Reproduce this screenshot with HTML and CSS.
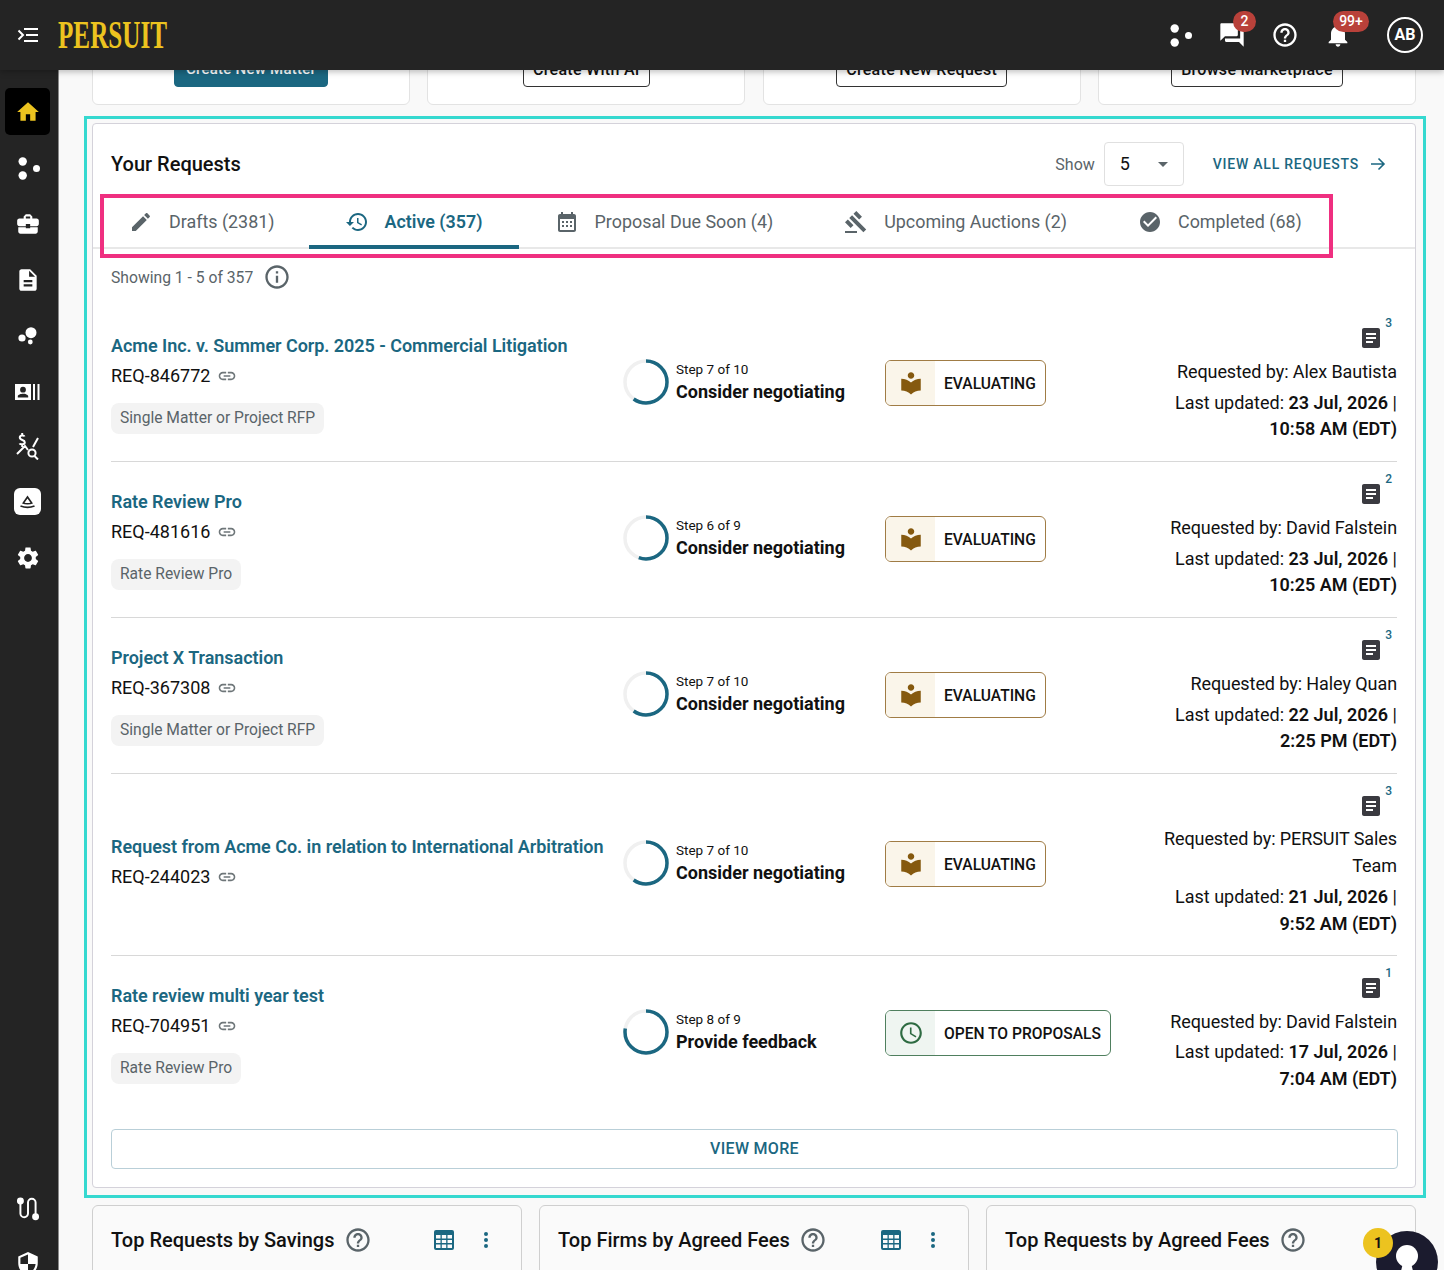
FILE: index.html
```html
<!DOCTYPE html>
<html lang="en">
<head>
<meta charset="UTF-8">
<meta name="viewport" content="width=device-width, initial-scale=1.0">
<title>Persuit Dashboard</title>
<link rel="stylesheet" href="styles.css">
</head>
<body>

<!-- Icon sprites -->
<svg class="icon-defs" xmlns="http://www.w3.org/2000/svg">
    <symbol id="i-dots" viewBox="0 0 24 24"><circle cx="6.7" cy="5.5" r="4.2"/><circle cx="6.7" cy="19.5" r="4.2"/><circle cx="20.5" cy="12.5" r="3.5"/></symbol>
    <symbol id="i-home" viewBox="0 0 24 24"><path d="M10 20v-6h4v6h5v-8h3L12 3 2 12h3v8z"/></symbol>
    <symbol id="i-case" viewBox="0 0 24 24"><path d="M10 16v-1H3.01L3 19c0 1.11.89 2 2 2h14c1.11 0 2-.89 2-2v-4h-7v1h-4zm10-9h-4.01V5l-2-2h-4l-2 2v2H4c-1.1 0-2 .9-2 2v3c0 1.11.89 2 2 2h6v-2h4v2h6c1.1 0 2-.9 2-2V9c0-1.1-.9-2-2-2zm-6 0h-4V5h4v2z"/></symbol>
    <symbol id="i-doc" viewBox="0 0 24 24"><path d="M14 2H6c-1.1 0-1.99.9-1.99 2L4 20c0 1.1.89 2 1.99 2H18c1.1 0 2-.9 2-2V8l-6-6zm2 16H8v-2h8v2zm0-4H8v-2h8v2zm-3-5V3.5L18.5 9H13z"/></symbol>
    <symbol id="i-edit" viewBox="0 0 24 24"><path d="M3 17.25V21h3.75L17.81 9.94l-3.75-3.75L3 17.25zM20.71 7.04c.39-.39.39-1.02 0-1.41l-2.34-2.34c-.39-.39-1.02-.39-1.41 0l-1.83 1.83 3.75 3.75 1.83-1.83z"/></symbol>
    <symbol id="i-history" viewBox="0 0 24 24"><path d="M13 3c-4.97 0-9 4.03-9 9H1l3.89 3.89.07.14L9 12H6c0-3.87 3.13-7 7-7s7 3.13 7 7-3.13 7-7 7c-1.93 0-3.68-.79-4.94-2.06l-1.42 1.42C8.27 19.99 10.51 21 13 21c4.97 0 9-4.03 9-9s-4.03-9-9-9zm-1 5v5l4.28 2.54.72-1.21-3.5-2.08V8H12z"/></symbol>
    <symbol id="i-calendar" viewBox="0 0 24 24"><path d="M19 4h-1V2h-2v2H8V2H6v2H5c-1.11 0-1.99.9-1.99 2L3 20c0 1.1.89 2 2 2h14c1.1 0 2-.9 2-2V6c0-1.1-.9-2-2-2zm0 16H5V9h14v11zM7 11h2v2H7zm4 0h2v2h-2zm4 0h2v2h-2zm-8 4h2v2H7zm4 0h2v2h-2zm4 0h2v2h-2z"/></symbol>
    <symbol id="i-gavel" viewBox="0 0 24 24"><path d="M1 21h12v2H1zM5.245 8.07l2.83-2.827 14.14 14.142-2.828 2.828zM12.317 1l5.657 5.656-2.83 2.83-5.654-5.66zM3.825 9.485l5.657 5.657-2.828 2.828-5.657-5.657z"/></symbol>
    <symbol id="i-check" viewBox="0 0 24 24"><path d="M12 2C6.48 2 2 6.48 2 12s4.48 10 10 10 10-4.48 10-10S17.52 2 12 2zm-2 15l-5-5 1.41-1.41L10 14.17l7.59-7.59L19 8l-9 9z"/></symbol>
    <symbol id="i-help" viewBox="0 0 24 24"><path d="M11 18h2v-2h-2v2zm1-16C6.48 2 2 6.48 2 12s4.48 10 10 10 10-4.48 10-10S17.52 2 12 2zm0 18c-4.41 0-8-3.59-8-8s3.59-8 8-8 8 3.59 8 8-3.59 8-8 8zm0-14c-2.21 0-4 1.79-4 4h2c0-1.1.9-2 2-2s2 .9 2 2c0 2-3 1.75-3 5h2c0-2.25 3-2.5 3-5 0-2.21-1.79-4-4-4z"/></symbol>
    <symbol id="i-info" viewBox="0 0 24 24"><path d="M11 7h2v2h-2zm0 4h2v6h-2zm1-9C6.48 2 2 6.48 2 12s4.48 10 10 10 10-4.48 10-10S17.52 2 12 2zm0 18c-4.41 0-8-3.59-8-8s3.59-8 8-8 8 3.59 8 8-3.59 8-8 8z"/></symbol>
    <symbol id="i-bell" viewBox="0 0 24 24"><path d="M12 22c1.1 0 2-.9 2-2h-4c0 1.1.89 2 2 2zm6-6v-5c0-3.07-1.64-5.64-4.5-6.32V4c0-.83-.67-1.5-1.5-1.5s-1.5.67-1.5 1.5v.68C7.63 5.36 6 7.92 6 11v5l-2 2v1h16v-1l-2-2z"/></symbol>
    <symbol id="i-chat" viewBox="0 0 24 24"><path d="M21 6h-2v9H6v2c0 .55.45 1 1 1h11l4 4V7c0-.55-.45-1-1-1zm-4 6V3c0-.55-.45-1-1-1H3c-.55 0-1 .45-1 1v14l4-4h10c.55 0 1-.45 1-1z"/></symbol>
    <symbol id="i-gear" viewBox="0 0 24 24"><path d="M19.14 12.94c.04-.3.06-.61.06-.94 0-.32-.02-.64-.07-.94l2.03-1.58c.18-.14.23-.41.12-.61l-1.92-3.32c-.12-.22-.37-.29-.59-.22l-2.39.96c-.5-.38-1.03-.7-1.62-.94l-.36-2.54c-.04-.24-.24-.41-.48-.41h-3.84c-.24 0-.43.17-.47.41l-.36 2.54c-.59.24-1.13.57-1.62.94l-2.39-.96c-.22-.08-.47 0-.59.22L2.74 8.87c-.12.21-.08.47.12.61l2.03 1.58c-.05.3-.09.63-.09.94s.02.64.07.94l-2.03 1.58c-.18.14-.23.41-.12.61l1.92 3.32c.12.22.37.29.59.22l2.39-.96c.5.38 1.03.7 1.62.94l.36 2.54c.05.24.24.41.48.41h3.84c.24 0 .44-.17.47-.41l.36-2.54c.59-.24 1.13-.56 1.62-.94l2.39.96c.22.08.47 0 .59-.22l1.92-3.32c.12-.22.07-.47-.12-.61l-2.01-1.58zM12 15.6c-1.98 0-3.6-1.62-3.6-3.6s1.62-3.6 3.6-3.6 3.6 1.62 3.6 3.6-1.62 3.6-3.6 3.6z"/></symbol>
    <symbol id="i-link" viewBox="0 0 24 24"><path d="M3.9 12c0-1.71 1.39-3.1 3.1-3.1h4V7H7c-2.76 0-5 2.24-5 5s2.24 5 5 5h4v-1.9H7c-1.71 0-3.1-1.39-3.1-3.1zM8 13h8v-2H8v2zm9-6h-4v1.9h4c1.71 0 3.1 1.39 3.1 3.1s-1.39 3.1-3.1 3.1h-4V17h4c2.76 0 5-2.24 5-5s-2.24-5-5-5z"/></symbol>
    <symbol id="i-article" viewBox="0 0 24 24"><path d="M19 2H5c-1.1 0-2 .9-2 2v16c0 1.1.9 2 2 2h14c1.1 0 2-.9 2-2V4c0-1.1-.9-2-2-2zm-5 15H7v-2h7v2zm3-4H7v-2h10v2zm0-4H7V7h10v2z"/></symbol>
    <symbol id="i-reader" viewBox="0 0 24 24"><path d="M12 11.55C9.64 9.35 6.48 8 3 8v11c3.48 0 6.64 1.35 9 3.55 2.36-2.19 5.52-3.55 9-3.55V8c-3.48 0-6.64 1.35-9 3.55zM12 8c1.66 0 3-1.34 3-3s-1.34-3-3-3-3 1.34-3 3 1.34 3 3 3z"/></symbol>
    <symbol id="i-clock" viewBox="0 0 24 24"><path d="M11.99 2C6.47 2 2 6.48 2 12s4.47 10 9.99 10C17.52 22 22 17.52 22 12S17.52 2 11.99 2zM12 20c-4.42 0-8-3.58-8-8s3.58-8 8-8 8 3.58 8 8-3.58 8-8 8zm.5-13H11v6l5.25 3.15.75-1.23-4.5-2.67z"/></symbol>
    <symbol id="i-shield" viewBox="0 0 24 24"><path d="M12 1L3 5v6c0 5.55 3.84 10.74 9 12 5.16-1.26 9-6.45 9-12V5l-9-4zm0 10.99h7c-.53 4.12-3.28 7.79-7 8.94V12H5V6.3l7-3.11v8.8z"/></symbol>
    <symbol id="i-table" viewBox="0 0 20 20"><path fill-rule="evenodd" d="M2 0h16a2 2 0 0 1 2 2v16a2 2 0 0 1-2 2H2a2 2 0 0 1-2-2V2a2 2 0 0 1 2-2zM2 5v3.5h4.5V5zm5.8 0v3.5h4.4V5zm5.7 0v3.5H18V5zM2 10v3h4.5v-3zm5.8 0v3h4.4v-3zm5.7 0v3H18v-3zM2 14.5V18h4.5v-3.5zm5.8 0V18h4.4v-3.5zm5.7 0V18H18v-3.5z"/></symbol>
    <symbol id="i-more" viewBox="0 0 24 24"><circle cx="12" cy="6" r="2"/><circle cx="12" cy="12" r="2"/><circle cx="12" cy="18" r="2"/></symbol>
</svg>

<!-- Top bar -->
<header class="topbar">
    <svg class="menu-icon" viewBox="0 0 24 24" fill="none" stroke="currentColor" stroke-width="2"><path d="M8 6h14M10 12h12M8 18h14M2.5 7.5L7 12l-4.5 4.5"/></svg>
    <div class="logo"><span class="logo-text">PERSUIT</span></div>
    <div class="topbar-actions">
        <svg class="top-icon dots-icon"><use href="#i-dots"/></svg>
        <div class="top-item chat-item">
            <svg class="top-icon"><use href="#i-chat"/></svg>
            <span class="top-badge">2</span>
        </div>
        <svg class="top-icon help-icon"><use href="#i-help"/></svg>
        <div class="top-item bell-item">
            <svg class="top-icon"><use href="#i-bell"/></svg>
            <span class="top-badge top-badge-wide">99+</span>
        </div>
        <div class="avatar">AB</div>
    </div>
</header>

<div class="layout">
    <!-- Sidebar -->
    <nav class="sidebar">
        <a class="side-item active"><svg class="side-icon"><use href="#i-home"/></svg></a>
        <a class="side-item"><svg class="side-icon side-icon-dots"><use href="#i-dots"/></svg></a>
        <a class="side-item"><svg class="side-icon"><use href="#i-case"/></svg></a>
        <a class="side-item"><svg class="side-icon"><use href="#i-doc"/></svg></a>
        <a class="side-item">
            <svg class="side-icon side-icon-dots" viewBox="0 0 24 24"><circle cx="15" cy="8.7" r="5.5"/><circle cx="6" cy="14" r="3.6"/><circle cx="14.3" cy="18" r="2.4"/></svg>
        </a>
        <a class="side-item side-item-tight">
            <svg class="side-icon side-icon-wide" viewBox="0 0 26 24"><path fill-rule="evenodd" d="M0 5h16v16H0zM8 7.8a2.9 2.9 0 1 0 0 5.8 2.9 2.9 0 0 0 0-5.8zM2.8 18.6h10.4v-1.4c0-1.5-3.2-2.4-5.2-2.4s-5.2.9-5.2 2.4z"/><path d="M18 5h2v16h-2zM22.5 5h2v16h-2z"/></svg>
        </a>
        <a class="side-item side-item-tight">
            <svg class="side-icon side-icon-wide side-icon-line" viewBox="0 0 26 28" stroke="#fff" stroke-width="2"><path d="M9.5 4.5C9 3.2 4.8 3 4.8 5.6c0 3 5 1.8 5 4.7 0 2.6-4.5 2.5-5.2 1M7.2 1v2M7.2 12.5V15M23 6l-5 9M2 22l8-8 3 4"/><circle cx="17" cy="21" r="3.6"/><path d="M19.5 24l3.5 3.5"/></svg>
        </a>
        <a class="side-item">
            <svg class="side-icon side-icon-app" viewBox="0 0 27 27"><rect width="27" height="27" rx="6" fill="#fff"/><path d="M13.5 7.5l5.500 8c-3.500 1.200-7.500 1.200-11 0zM13.5 10.5l-3 4.200c2 .4 4 .4 6 0z" fill="#222" fill-rule="evenodd"/><path d="M6.500 18c4.500 1.700 9.500 1.700 14 0" fill="none" stroke="#222" stroke-width="1.800"/></svg>
        </a>
        <a class="side-item"><svg class="side-icon"><use href="#i-gear"/></svg></a>
        <a class="side-item side-item-low">
            <svg class="side-icon side-icon-line" viewBox="0 0 24 24" stroke="#fff" stroke-width="1.8"><path d="M5 6v11a3.500 3.500 0 0 0 7 0V7a3.500 3.500 0 0 1 7 0v13"/><circle cx="5" cy="5.500" r="2.300" fill="#fff"/><circle cx="19" cy="20" r="2.300" fill="#fff"/></svg>
        </a>
        <a class="side-item"><svg class="side-icon"><use href="#i-shield"/></svg></a>
    </nav>

    <main class="main">
        <!-- Quick action cards -->
        <section class="quick-cards">
            <div class="quick-card"><button class="quick-btn primary">Create New Matter</button></div>
            <div class="quick-card"><button class="quick-btn">Create With AI</button></div>
            <div class="quick-card"><button class="quick-btn">Create New Request</button></div>
            <div class="quick-card"><button class="quick-btn">Browse Marketplace</button></div>
        </section>

        <!-- Your Requests -->
        <section class="highlight">
            <div class="requests-card">
                <div class="requests-head">
                    <h2 class="requests-title">Your Requests</h2>
                    <span class="show-label">Show</span>
                    <div class="show-select">5<span class="caret"></span></div>
                    <a class="view-all">VIEW ALL REQUESTS
                        <svg class="arrow" viewBox="0 0 16 16" fill="none" stroke="currentColor" stroke-width="1.6"><path d="M1 8h13M8.500 2.500L14 8l-5.500 5.500"/></svg>
                    </a>
                </div>

                <div class="tabs">
                    <div class="tab tab-first"><svg class="tab-icon"><use href="#i-edit"/></svg>Drafts (2381)</div>
                    <div class="tab active"><svg class="tab-icon"><use href="#i-history"/></svg>Active (357)</div>
                    <div class="tab"><svg class="tab-icon"><use href="#i-calendar"/></svg>Proposal Due Soon (4)</div>
                    <div class="tab"><svg class="tab-icon"><use href="#i-gavel"/></svg>Upcoming Auctions (2)</div>
                    <div class="tab"><svg class="tab-icon"><use href="#i-check"/></svg>Completed (68)</div>
                    <div class="tabs-marker"></div>
                </div>

                <div class="showing">Showing 1 - 5 of 357 <svg class="info-icon"><use href="#i-info"/></svg></div>

                <div class="request-list">
                    <article class="request-row">
                        <div class="req-main">
                            <a class="req-title">Acme Inc. v. Summer Corp. 2025 - Commercial Litigation</a>
                            <div class="req-id">REQ-846772 <svg class="link-icon"><use href="#i-link"/></svg></div>
                            <span class="req-chip">Single Matter or Project RFP</span>
                        </div>
                        <div class="req-step">
                            <svg class="ring" viewBox="0 0 46 46"><circle class="ring-track" cx="23" cy="23" r="21"/><circle class="ring-bar" cx="23" cy="23" r="21" pathLength="100" stroke-dasharray="60 100"/></svg>
                            <div><div class="step-num">Step 7 of 10</div><div class="step-name">Consider negotiating</div></div>
                        </div>
                        <div class="req-status">
                            <div class="status eval"><span class="status-icon"><svg><use href="#i-reader"/></svg></span><span class="status-text">EVALUATING</span></div>
                        </div>
                        <div class="req-meta">
                            <div class="doc-line"><svg class="doc-icon"><use href="#i-article"/></svg><span class="doc-count">3</span></div>
                            <div class="meta-by">Requested by: Alex Bautista</div>
                            <div class="meta-date">Last updated: <b>23 Jul, 2026</b> | <b>10:58 AM (EDT)</b></div>
                        </div>
                    </article>

                    <article class="request-row">
                        <div class="req-main">
                            <a class="req-title">Rate Review Pro</a>
                            <div class="req-id">REQ-481616 <svg class="link-icon"><use href="#i-link"/></svg></div>
                            <span class="req-chip">Rate Review Pro</span>
                        </div>
                        <div class="req-step">
                            <svg class="ring" viewBox="0 0 46 46"><circle class="ring-track" cx="23" cy="23" r="21"/><circle class="ring-bar" cx="23" cy="23" r="21" pathLength="100" stroke-dasharray="55.6 100"/></svg>
                            <div><div class="step-num">Step 6 of 9</div><div class="step-name">Consider negotiating</div></div>
                        </div>
                        <div class="req-status">
                            <div class="status eval"><span class="status-icon"><svg><use href="#i-reader"/></svg></span><span class="status-text">EVALUATING</span></div>
                        </div>
                        <div class="req-meta">
                            <div class="doc-line"><svg class="doc-icon"><use href="#i-article"/></svg><span class="doc-count">2</span></div>
                            <div class="meta-by">Requested by: David Falstein</div>
                            <div class="meta-date">Last updated: <b>23 Jul, 2026</b> | <b>10:25 AM (EDT)</b></div>
                        </div>
                    </article>

                    <article class="request-row">
                        <div class="req-main">
                            <a class="req-title">Project X Transaction</a>
                            <div class="req-id">REQ-367308 <svg class="link-icon"><use href="#i-link"/></svg></div>
                            <span class="req-chip">Single Matter or Project RFP</span>
                        </div>
                        <div class="req-step">
                            <svg class="ring" viewBox="0 0 46 46"><circle class="ring-track" cx="23" cy="23" r="21"/><circle class="ring-bar" cx="23" cy="23" r="21" pathLength="100" stroke-dasharray="60 100"/></svg>
                            <div><div class="step-num">Step 7 of 10</div><div class="step-name">Consider negotiating</div></div>
                        </div>
                        <div class="req-status">
                            <div class="status eval"><span class="status-icon"><svg><use href="#i-reader"/></svg></span><span class="status-text">EVALUATING</span></div>
                        </div>
                        <div class="req-meta">
                            <div class="doc-line"><svg class="doc-icon"><use href="#i-article"/></svg><span class="doc-count">3</span></div>
                            <div class="meta-by">Requested by: Haley Quan</div>
                            <div class="meta-date">Last updated: <b>22 Jul, 2026</b> | <b>2:25 PM (EDT)</b></div>
                        </div>
                    </article>

                    <article class="request-row request-row-tall">
                        <div class="req-main no-chip">
                            <a class="req-title">Request from Acme Co. in relation to International Arbitration</a>
                            <div class="req-id">REQ-244023 <svg class="link-icon"><use href="#i-link"/></svg></div>
                        </div>
                        <div class="req-step">
                            <svg class="ring" viewBox="0 0 46 46"><circle class="ring-track" cx="23" cy="23" r="21"/><circle class="ring-bar" cx="23" cy="23" r="21" pathLength="100" stroke-dasharray="60 100"/></svg>
                            <div><div class="step-num">Step 7 of 10</div><div class="step-name">Consider negotiating</div></div>
                        </div>
                        <div class="req-status">
                            <div class="status eval"><span class="status-icon"><svg><use href="#i-reader"/></svg></span><span class="status-text">EVALUATING</span></div>
                        </div>
                        <div class="req-meta">
                            <div class="doc-line"><svg class="doc-icon"><use href="#i-article"/></svg><span class="doc-count">3</span></div>
                            <div class="meta-by">Requested by: PERSUIT Sales Team</div>
                            <div class="meta-date">Last updated: <b>21 Jul, 2026</b> | <b>9:52 AM (EDT)</b></div>
                        </div>
                    </article>

                    <article class="request-row">
                        <div class="req-main">
                            <a class="req-title">Rate review multi year test</a>
                            <div class="req-id">REQ-704951 <svg class="link-icon"><use href="#i-link"/></svg></div>
                            <span class="req-chip">Rate Review Pro</span>
                        </div>
                        <div class="req-step">
                            <svg class="ring" viewBox="0 0 46 46"><circle class="ring-track" cx="23" cy="23" r="21"/><circle class="ring-bar" cx="23" cy="23" r="21" pathLength="100" stroke-dasharray="77.8 100"/></svg>
                            <div><div class="step-num">Step 8 of 9</div><div class="step-name">Provide feedback</div></div>
                        </div>
                        <div class="req-status">
                            <div class="status open"><span class="status-icon"><svg><use href="#i-clock"/></svg></span><span class="status-text">OPEN TO PROPOSALS</span></div>
                        </div>
                        <div class="req-meta">
                            <div class="doc-line"><svg class="doc-icon"><use href="#i-article"/></svg><span class="doc-count">1</span></div>
                            <div class="meta-by">Requested by: David Falstein</div>
                            <div class="meta-date">Last updated: <b>17 Jul, 2026</b> | <b>7:04 AM (EDT)</b></div>
                        </div>
                    </article>
                </div>

                <button class="view-more">VIEW MORE</button>
            </div>
        </section>

        <!-- Chart cards -->
        <section class="chart-cards">
            <div class="chart-card">
                <h3 class="chart-title">Top Requests by Savings</h3>
                <svg class="chart-help"><use href="#i-help"/></svg>
                <svg class="chart-table"><use href="#i-table"/></svg>
                <svg class="chart-more"><use href="#i-more"/></svg>
            </div>
            <div class="chart-card">
                <h3 class="chart-title">Top Firms by Agreed Fees</h3>
                <svg class="chart-help"><use href="#i-help"/></svg>
                <svg class="chart-table"><use href="#i-table"/></svg>
                <svg class="chart-more"><use href="#i-more"/></svg>
            </div>
            <div class="chart-card">
                <h3 class="chart-title">Top Requests by Agreed Fees</h3>
                <svg class="chart-help"><use href="#i-help"/></svg>
            </div>
        </section>
    </main>
</div>

<!-- Support bubble -->
<div class="bubble">
    <svg class="bubble-mark" viewBox="0 0 24 30"><circle cx="12" cy="11" r="11"/><path d="M8 18h8l3 12H5z"/></svg>
</div>
<span class="bubble-badge">1</span>

</body>
</html>
```

FILE: styles.css
```css
/* Basic Styles */
html, body {
    margin: 0;
    padding: 0;
    height: 1270px;
    overflow: hidden;
}
body {
    font-family: Roboto, "Liberation Sans", sans-serif;
    font-size: 18px;
    color: #111;
    background-color: #f9f9f9;
}
.icon-defs {
    display: none;
}
h2, h3 {
    margin: 0;
}

/* Top Bar */
.topbar {
    position: relative;
    z-index: 5;
    display: flex;
    align-items: center;
    height: 70px;
    padding: 0 21px 0 16px;
    background-color: #242424;
    color: #fff;
    box-shadow: 0 2px 6px rgba(0, 0, 0, 0.25);
}
.menu-icon {
    width: 24px;
    height: 24px;
    color: #fff;
    margin-right: 18px;
}
.logo {
    width: 109px;
    height: 44px;
    overflow: visible;
}
.logo-text {
    display: inline-block;
    font-family: "Liberation Serif", serif;
    font-size: 39px;
    font-weight: 700;
    line-height: 44px;
    color: #ecc31f;
    transform: scaleX(0.645);
    transform-origin: left center;
}
.topbar-actions {
    display: flex;
    align-items: center;
    margin-left: auto;
}
.top-icon {
    display: block;
    width: 28px;
    height: 28px;
    fill: #fff;
}
.top-icon.dots-icon {
    width: 24px;
    height: 24px;
    margin-right: 26px;
}
.top-item {
    position: relative;
}
.top-icon.help-icon {
    margin: 0 25px;
}
.top-icon + .top-badge {
    position: absolute;
    top: -10px;
    left: 15px;
    min-width: 23px;
    height: 21px;
    border-radius: 11px;
    background-color: #b9413a;
    color: #fff;
    font-size: 14px;
    font-weight: 500;
    line-height: 21px;
    text-align: center;
}
.top-icon + .top-badge-wide {
    left: 9px;
    width: 36px;
}
.avatar {
    width: 32px;
    height: 32px;
    margin-left: 35px;
    border: 2px solid #fff;
    border-radius: 50%;
    font-size: 16px;
    font-weight: 700;
    line-height: 32px;
    text-align: center;
}

/* Sidebar */
.layout {
    display: flex;
    height: 1200px;
}
.sidebar {
    flex: 0 0 59px;
    box-sizing: border-box;
    padding: 18px 0 0 5px;
    background-color: #242424;
    border-right: 1px solid #8a8a8a;
    overflow: hidden;
}
.side-item {
    display: flex;
    align-items: center;
    justify-content: center;
    width: 45px;
    height: 47px;
    margin-bottom: 9px;
    border-radius: 5px;
}
.side-item.active {
    background-color: #000;
}
.side-item.active .side-icon {
    fill: #ecc31f;
}
.side-item-tight {
    margin-top: -1px;
}
.side-item-low {
    margin-top: 603px;
}
.side-icon {
    width: 26px;
    height: 26px;
    fill: #fff;
}
.side-icon-dots {
    width: 24px;
    height: 24px;
}
.side-icon-wide {
    width: 26px;
    height: 28px;
}
.side-icon-line {
    fill: none;
}
.side-icon-app {
    width: 27px;
    height: 27px;
}

/* Main */
.main {
    flex: 1;
    min-width: 0;
    margin-top: -60px;
    padding: 0 18px 0 25px;
}
.quick-cards {
    display: grid;
    grid-template-columns: repeat(4, 1fr);
    column-gap: 17.33px;
    margin: 0 10px 11px 8px;
}
.quick-card {
    display: flex;
    justify-content: center;
    align-items: flex-end;
    height: 95px;
    padding-bottom: 17px;
    box-sizing: border-box;
    background-color: #fff;
    border: 1px solid #e3e3e3;
    border-radius: 6px;
}
.quick-btn {
    height: 36px;
    padding: 0 9px;
    background-color: #fff;
    border: 1px solid #333;
    border-radius: 4px;
    color: #111;
    font-family: inherit;
    font-size: 16px;
    font-weight: 500;
    letter-spacing: 0.3px;
}
.quick-btn.primary {
    padding: 0 11px;
    background-color: #1b6781;
    border-color: #1b6781;
    color: #fff;
    font-size: 15px;
    letter-spacing: 0.25px;
}

/* Requests Card */
.highlight {
    box-sizing: border-box;
    padding: 4px 7px 7px 5px;
    border: 3px solid #36d9d0;
    margin-bottom: 7px;
}
.requests-card {
    position: relative;
    box-sizing: border-box;
    height: 1065px;
    background-color: #fff;
    border: 1px solid #d4d2da;
    border-radius: 4px;
}
.requests-head {
    display: flex;
    align-items: center;
    box-sizing: border-box;
    height: 70px;
    padding: 10px 29px 0 18px;
}
.requests-title {
    margin-right: auto;
    font-size: 20px;
    font-weight: 500;
}
.show-label {
    margin-right: 9px;
    font-size: 16px;
    color: #5a6469;
}
.show-select {
    position: relative;
    box-sizing: border-box;
    width: 80px;
    height: 44px;
    padding-left: 15px;
    border: 1px solid #e0e0e0;
    border-radius: 4px;
    line-height: 42px;
}
.caret {
    position: absolute;
    top: 19px;
    right: 15px;
    border-left: 5px solid transparent;
    border-right: 5px solid transparent;
    border-top: 5px solid #5a6469;
}
.view-all {
    display: flex;
    align-items: center;
    margin-left: 29px;
    color: #1b6781;
    font-size: 14px;
    font-weight: 500;
    letter-spacing: 0.75px;
}
.arrow {
    width: 16px;
    height: 16px;
    margin-left: 11px;
}

/* Tabs */
.tabs {
    position: relative;
    display: flex;
    height: 55px;
    border-bottom: 2px solid #e8e8e8;
    box-sizing: border-box;
}
.tab {
    display: flex;
    align-items: center;
    padding: 0 35px 0 36px;
    color: #5a6469;
    font-size: 17.9px;
    margin-bottom: -2px;
}
.tab.tab-first {
    padding-right: 34px;
}
.tab.active {
    padding-right: 36px;
    color: #1b6781;
    font-weight: 600;
    border-bottom: 4px solid #1b6781;
    box-sizing: border-box;
    padding-top: 4px;
}
.tab-icon {
    width: 24px;
    height: 24px;
    margin-right: 16px;
    fill: currentColor;
}
.tab.active .tab-icon {
    fill: #1b6781;
}
.tabs-marker {
    position: absolute;
    top: -0.5px;
    left: 6.5px;
    width: 1233.5px;
    height: 64px;
    box-sizing: border-box;
    border: 4px solid #ef2f80;
    pointer-events: none;
}
.showing {
    display: flex;
    align-items: center;
    height: 24px;
    margin-top: 16px;
    padding-left: 18px;
    font-size: 15.7px;
    color: #5a6469;
}
.info-icon {
    width: 28px;
    height: 28px;
    margin-left: 10px;
    fill: #5a6469;
}

/* Request Rows */
.request-list {
    margin: 17px 18px 0;
}
.request-row {
    display: grid;
    grid-template-columns: 512px 262px 1fr 236px;
    align-items: center;
    box-sizing: border-box;
    padding: 10px 0 18.5px;
    border-bottom: 1px solid #d8d8d8;
}
.request-row:last-child {
    border-bottom: none;
}
.request-row-tall {
    padding-bottom: 17.5px;
}
.request-row-tall .doc-line {
    height: 42px;
}
.request-row-tall .meta-date {
    margin-top: 5px;
}
.request-row-tall .req-step {
    margin-top: 4px;
}
.request-row-tall .req-status {
    margin-top: 6px;
}
.req-main {
    display: flex;
    flex-direction: column;
    align-items: flex-start;
    padding-top: 10px;
}
.req-main.no-chip {
    padding-top: 2px;
}
.req-title {
    color: #1b6781;
    font-size: 18px;
    font-weight: 600;
    line-height: 24px;
    letter-spacing: -0.04px;
}
.req-id {
    display: flex;
    align-items: center;
    margin-top: 6px;
    line-height: 24px;
}
.link-icon {
    width: 20px;
    height: 20px;
    margin-left: 7px;
    fill: #6e7679;
}
.req-chip {
    margin-top: 15px;
    padding: 0 9px;
    height: 31px;
    background-color: #f3f3f3;
    border-radius: 8px;
    color: #5a6469;
    font-size: 15.6px;
    line-height: 31px;
}
.req-step {
    display: flex;
    align-items: center;
    margin-top: 6px;
}
.ring {
    width: 46px;
    height: 46px;
    margin-right: 7px;
    transform: rotate(-90deg);
    fill: none;
    stroke-width: 3.5;
}
.ring-track {
    stroke: #f0f0f0;
}
.ring-bar {
    stroke: #1b6781;
}
.step-num {
    font-size: 13.5px;
    line-height: 18px;
}
.step-name {
    margin-top: 2px;
    font-size: 18px;
    font-weight: 700;
    line-height: 24px;
}
.req-status {
    margin-top: 8px;
}
.status {
    display: inline-flex;
    align-items: stretch;
    height: 46px;
    box-sizing: border-box;
    border: 1px solid;
    border-radius: 6px;
    overflow: hidden;
    vertical-align: middle;
}
.status.eval {
    border-color: #a07c45;
}
.status.open {
    border-color: #4f7f5e;
}
.status-icon {
    display: flex;
    align-items: center;
    justify-content: center;
    width: 49px;
}
.status-icon svg {
    width: 26px;
    height: 26px;
}
.eval .status-icon {
    background-color: #faf5ea;
}
.eval .status-icon svg {
    fill: #85590f;
}
.open .status-icon {
    background-color: #eff5f1;
}
.open .status-icon svg {
    fill: #2e6b42;
}
.status-text {
    padding: 0 9px;
    font-size: 15.6px;
    font-weight: 500;
    line-height: 46px;
}
.req-meta {
    text-align: right;
    line-height: 26.5px;
}
.doc-line {
    display: flex;
    justify-content: flex-end;
    height: 43px;
}
.doc-icon {
    width: 24px;
    height: 24px;
    margin-top: 10px;
    fill: #3a3a40;
}
.doc-count {
    margin: 0 5px 0 2px;
    color: #1b6781;
    font-size: 12px;
    font-weight: 500;
    line-height: 14px;
}
.meta-by {
    letter-spacing: -0.08px;
}
.meta-date {
    margin-top: 4px;
}
.meta-date b {
    font-weight: 600;
}
.view-more {
    display: block;
    width: 1287px;
    height: 40px;
    margin: 18px 18px 0;
    background-color: #fff;
    border: 1px solid #b9cfd8;
    border-radius: 4px;
    color: #1b6781;
    font-family: inherit;
    font-size: 16px;
    font-weight: 500;
    letter-spacing: 0.3px;
}

/* Chart Cards */
.chart-cards {
    display: grid;
    grid-template-columns: repeat(3, 1fr);
    column-gap: 17px;
    margin: 0 10px 0 8px;
}
.chart-card {
    display: flex;
    align-items: center;
    height: 120px;
    align-self: start;
    box-sizing: border-box;
    padding: 0 18px 50px;
    background-color: #fafafa;
    border: 1px solid #cfcfcf;
    border-radius: 6px;
}
.chart-title {
    font-size: 20px;
    font-weight: 500;
}
.chart-help {
    width: 28px;
    height: 28px;
    margin-left: 9px;
    fill: #5a6469;
}
.chart-table {
    width: 20px;
    height: 20px;
    margin-left: auto;
    fill: #1b6781;
}
.chart-more {
    width: 24px;
    height: 24px;
    margin: 0 5px 0 20px;
    fill: #1b6781;
}

/* Support Bubble */
.bubble {
    position: fixed;
    left: 1376px;
    top: 1231px;
    width: 62px;
    height: 62px;
    border-radius: 50%;
    background-color: #1b1b2e;
    z-index: 6;
}
.bubble-mark {
    position: absolute;
    left: 19px;
    top: 14px;
    width: 24px;
    height: 30px;
    fill: #fff;
}
.bubble-badge {
    position: fixed;
    left: 1363px;
    top: 1228px;
    width: 30px;
    height: 30px;
    border-radius: 50%;
    background-color: #ecc31f;
    color: #111;
    font-size: 14px;
    font-weight: 700;
    line-height: 30px;
    text-align: center;
    z-index: 7;
}
```
